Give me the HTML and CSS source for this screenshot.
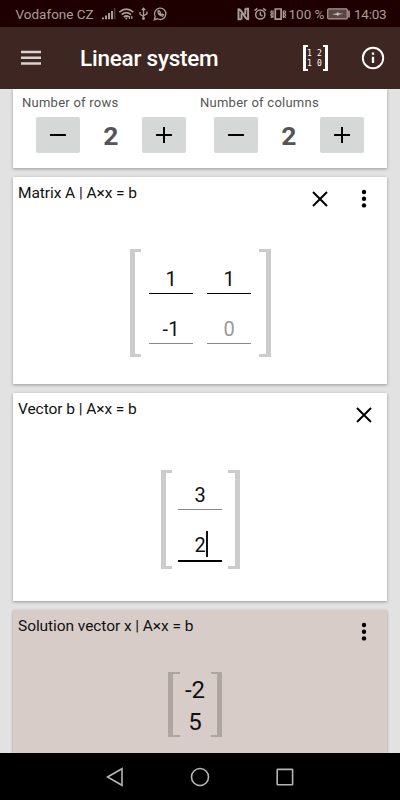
FILE: index.html
```html
<!DOCTYPE html>
<html lang="en">
<head>
<meta charset="utf-8">
<title>Linear system</title>
<link rel="stylesheet" href="styles.css">
</head>
<body>
<div class="status">
  <span class="carrier">Vodafone CZ</span>
  <svg class="status-left" width="66" height="16" viewBox="0 0 66 16" fill="none" stroke="#a99b98">
    <path stroke-width="2" d="M1 13.2v-1.700M4 13.200V9.500M7 13.200V7M10 13.200V5"/>
    <path stroke="#54403e" stroke-width="1.600" d="M12.600 13.200V2"/>
    <path stroke-width="1.700" d="M17.300 6.100q7-6 14 0M19.600 8.700q4.700-4 9.400 0M21.800 11q2.500-2 5 0"/>
    <path stroke-width="1.200" d="M27.500 10v3M29.800 10v3"/>
    <circle cx="24.300" cy="12.500" r="1" fill="#a99b98" stroke="none"/>
    <path stroke-width="1.300" d="M41.500 13V2.500M39.800 4.200l1.700-2 1.700 2M38 6v2.200l3.500 2.300M45 5.500v2.300l-3.500 2"/>
    <circle cx="41.500" cy="12.500" r="1.400" fill="#a99b98" stroke="none"/>
    <path stroke-width="1.300" d="M52.300 13.700l.9-3.200a5.700 5.700 0 1 1 2.300 2.300z"/>
    <path stroke-width="1.300" d="M56 5q-.4 4 4.600 5.200l1-1.200-1.500-.9-.8.700-1.500-1.500.5-.8-.8-1.500z"/>
  </svg>
  <svg class="status-right" width="51" height="16" viewBox="0 0 51 16" fill="none" stroke="#a99b98">
    <path stroke-width="2" d="M4.300 13.300H1.500V3.300q1.300-.2 2.300 1.300l5 7.300q1 1.500 2.300 1.300V2.700H8.300M4.500 7.500v6M8.300 8.500v-6"/>
    <circle cx="23.300" cy="8.500" r="4.600" stroke-width="1.500"/>
    <path stroke-width="1.400" d="M23.300 5.800v3l2.200 1.300M17.600 4.600l2.800-2.200M29 4.600l-2.800-2.200"/>
    <path stroke-width="1.700" d="M38.300 3h5.800v10.200h-5.800z"/>
    <path stroke-width="1.300" d="M36 4.500v7.500M46.400 4.500v7.500M34.800 4.500l-1 1.500 1 1.500-1 1.500 1 1.500-1 1.500M47.600 4.500l1 1.500-1 1.500 1 1.500-1 1.500 1 1.500"/>
  </svg>
  <span class="percent">100 %</span>
  <svg class="battery" width="24" height="12" viewBox="0 0 24 12">
    <rect x=".7" y=".9" width="19.600" height="10" rx="1" fill="#5c4643" stroke="#a99b98" stroke-width="1.200"/>
    <path d="M21.200 2.500h1.600v7h-1.600z" fill="#a99b98"/>
    <path d="M5 6.300l5.400-1V3.500l1.300 1.700 4.800.6-5.200 1v1.700L10 6.900z" fill="#d2c8c6"/>
  </svg>
  <span class="clock">14:03</span>
</div>
<header class="bar">
  <svg class="menu" width="20" height="16" viewBox="0 0 20 16"><path d="M0 2h20M0 7.700h20M0 13.400h20" stroke="#d9d4d3" stroke-width="2.500"/></svg>
  <h1>Linear system</h1>
  <div class="matrix-icon">
    <i class="edge"></i>
    <div class="mini"><span>1</span><span>2</span><span>1</span><span>0</span></div>
    <i class="edge end"></i>
  </div>
  <svg class="info" width="24" height="24" viewBox="0 0 24 24" fill="none" stroke="#fff"><circle cx="12" cy="12" r="10.200" stroke-width="1.900"/><path stroke-width="2.300" d="M12 10.700V17M12 6.600v2.200"/></svg>
</header>
<main>
  <section class="card size">
    <div class="counter">
      <label>Number of rows</label>
      <div class="stepper">
        <button><svg width="16" height="16"><path d="M0 8h16"/></svg></button>
        <b>2</b>
        <button><svg width="16" height="16"><path d="M0 8h16M8 0v16"/></svg></button>
      </div>
    </div>
    <div class="counter">
      <label>Number of columns</label>
      <div class="stepper">
        <button><svg width="16" height="16"><path d="M0 8h16"/></svg></button>
        <b>2</b>
        <button><svg width="16" height="16"><path d="M0 8h16M8 0v16"/></svg></button>
      </div>
    </div>
  </section>
  <section class="card">
    <div class="head">
      <h2>Matrix A | A×x = b</h2>
      <svg class="close" width="16" height="16"><path d="M1 1l14 14M15 1L1 15"/></svg>
      <svg class="dots" width="6" height="20"><circle cx="3" cy="3" r="2.200"/><circle cx="3" cy="9.700" r="2.200"/><circle cx="3" cy="16.400" r="2.200"/></svg>
    </div>
    <div class="matrix two">
      <i class="bracket"></i>
      <div class="cells">
        <span class="cell filled">1</span><span class="cell filled">1</span>
        <span class="cell">-1</span><span class="cell hint">0</span>
      </div>
      <i class="bracket end"></i>
    </div>
  </section>
  <section class="card vector">
    <div class="head">
      <h2>Vector b | A×x = b</h2>
      <svg class="close last" width="16" height="16"><path d="M1 1l14 14M15 1L1 15"/></svg>
    </div>
    <div class="matrix one">
      <i class="bracket"></i>
      <div class="cells">
        <span class="cell">3</span>
        <span class="cell focus">2<i class="caret"></i></span>
      </div>
      <i class="bracket end"></i>
    </div>
  </section>
  <section class="card solution">
    <div class="head">
      <h2>Solution vector x | A×x = b</h2>
      <svg class="dots" width="6" height="20"><circle cx="3" cy="3" r="2.200"/><circle cx="3" cy="9.700" r="2.200"/><circle cx="3" cy="16.400" r="2.200"/></svg>
    </div>
    <div class="matrix result">
      <i class="bracket"></i>
      <div class="cells"><span>-2</span><span>5</span></div>
      <i class="bracket end"></i>
    </div>
  </section>
</main>
<nav>
  <svg width="18" height="20" viewBox="0 0 18 20"><path d="M1.500 10L16 1.700v16.600z"/></svg>
  <svg width="20" height="20" viewBox="0 0 20 20"><circle cx="10" cy="10" r="8.500"/></svg>
  <svg width="18" height="20" viewBox="0 0 18 20"><rect x="1.200" y="2.400" width="15.400" height="15.400" rx=".5"/></svg>
</nav>
</body>
</html>
```
FILE: styles.css
```css
* { box-sizing: border-box; }
body {
  margin: 0;
  width: 400px;
  height: 800px;
  display: flex;
  flex-direction: column;
  overflow: hidden;
  font-family: Roboto, sans-serif;
  background: #e2e2e2;
  color: #111;
}
svg { display: block; flex: none; }
h1, h2 { margin: 0; white-space: nowrap; }

.status {
  flex: none;
  height: 27px;
  display: flex;
  align-items: center;
  padding: 1px 13.500px 0 15.500px;
  background: #1f0000;
  color: #a99b98;
  font-size: 13.500px;
  line-height: 26px;
  white-space: nowrap;
}
.carrier { width: 86px; letter-spacing: 0; }
.status-right { margin-left: 69px; }
.percent { width: 38px; margin-left: 1px; }
.battery { margin-left: 0; }
.clock { margin-left: auto; letter-spacing: -.2px; }

.bar {
  flex: none;
  height: 62px;
  display: flex;
  align-items: center;
  padding: 0 15px 0 21px;
  background: #3e2723;
  color: #fff;
}
.bar h1 { margin-left: 39px; font-size: 22.500px; font-weight: 500; letter-spacing: -.23px; line-height: 62px; width: 223px; }
.matrix-icon { display: flex; width: 25px; height: 26px; }
.edge { flex: none; width: 5px; border: 2px solid #fff; border-left-width: 3px; border-right: 0; }
.edge.end { border-left: 0; border-right: 3px solid #fff; }
.mini {
  flex: 1;
  display: grid;
  grid-template-columns: 10px 7px;
  grid-auto-rows: 10px;
  align-content: center;
  margin: 1px -1px 0;
  font: 8px/10px "DejaVu Sans Mono", monospace;
}
.info { margin-left: 33px; }

main { flex: 1; min-height: 0; overflow: hidden; display: flex; flex-direction: column; gap: 9px; padding: 0 13px; }
.card { flex: none; height: 207px; background: #fff; box-shadow: 0 1px 3px rgba(0, 0, 0, .32); }
.vector { height: 208px; }
.size { height: 79px; display: flex; padding-left: 9px; }
.counter { width: 178px; }
.counter label { display: block; padding-top: 5px; font-size: 13px; line-height: 17px; letter-spacing: .25px; color: #555; }
.stepper { display: flex; width: 150.500px; margin: 6px 0 0 13.500px; justify-content: space-between; align-items: center; }
.stepper button {
  width: 44.500px;
  height: 35.500px;
  padding: 0;
  display: grid;
  place-items: center;
  border: 0;
  border-radius: 2px;
  background: #d6d8d7;
}
.stepper path { stroke: #000; stroke-width: 2; }
.stepper b { font-size: 26.500px; line-height: 35px; color: #555; padding-top: 1px; }

.head { display: flex; height: 40px; padding: 6px 20px 0 5px; }
.head h2 { flex: 1; font-size: 15.500px; font-weight: 400; line-height: 20px; letter-spacing: -.07px; }
.close { margin: 8px 33.500px 0 0; stroke: #000; stroke-width: 2; }
.close.last { margin-right: -5px; }
.dots { margin: 6px 0 0; }

.matrix { display: flex; justify-content: space-between; margin: 0 auto; }
.two { width: 141px; height: 108px; margin-top: 32px; }
.one { width: 79px; height: 99px; margin-top: 37px; }
.bracket { flex: none; width: 11.500px; border: 3px solid #ccc; border-left-width: 5px; border-right: 0; }
.bracket.end { border-left: 0; border-right: 5px solid #ccc; }
.cells { display: grid; }
.two .cells { grid-template-columns: 44px 44px; gap: 14px; padding-top: 9px; align-content: start; }
.one .cells { grid-template-columns: 44px; row-gap: 14px; padding-top: 4px; align-content: start; }
.cell {
  display: flex;
  justify-content: center;
  height: 36px;
  border-bottom: 1px solid #888;
  font-size: 20px;
  line-height: 42px;
}
.filled { border-color: #000; }
.hint { color: #999; }
.focus { position: relative; height: 38px; border-bottom: 2px solid #000; }
.caret { position: absolute; left: 27.500px; top: 7px; width: 2px; height: 26px; background: #111; }

.solution { height: 160px; background: #d7ccc8; }
.result { width: 54px; height: 64.500px; margin-top: 22px; margin-left: 155px; }
.result .bracket { border-width: 2px 0 2px 5px; border-color: #aea4a2; }
.result .bracket.end { border-width: 2px 5px 2px 0; }
.result .cells { align-content: start; justify-items: center; font-size: 24px; line-height: 32px; padding-top: 2px; }

nav { flex: none; height: 47px; display: flex; align-items: center; justify-content: center; gap: 66px; background: #000; }
nav svg { fill: none; stroke: #b5b5b5; stroke-width: 1.600; }
```
